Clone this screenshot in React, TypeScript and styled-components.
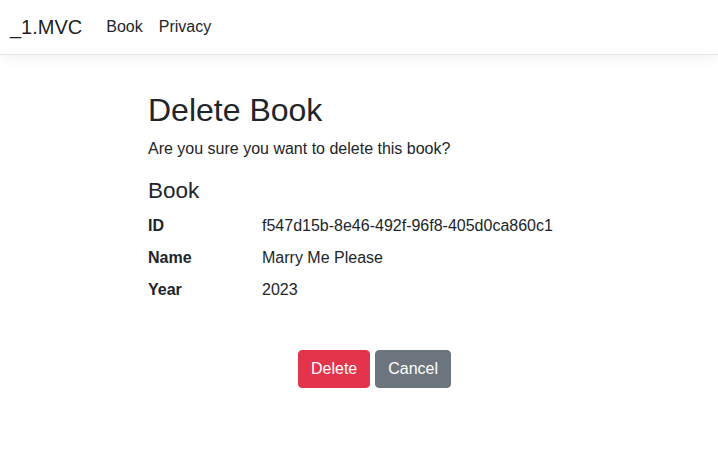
import React from "react";
import styled, { createGlobalStyle } from "styled-components";

const GlobalStyle = createGlobalStyle`
  html, body { margin: 0; padding: 0; background: #fff; }
  body {
    font-family: "Liberation Sans", Arial, sans-serif;
    font-size: 16px;
    line-height: 1.5;
    color: #212529;
  }
  * { box-sizing: border-box; }
`;

const NavBar = styled.header`
  display: flex;
  align-items: center;
  height: 55px;
  padding: 2px 10px 2px;
  border-bottom: 1px solid #e5e5e5;
  box-shadow: 0 4px 12px rgba(0, 0, 0, 0.05);
`;

const Brand = styled.a`
  font-size: 20px;
  line-height: 30px;
  color: rgba(0, 0, 0, 0.9);
  text-decoration: none;
  margin-right: 16px;
`;

const NavLink = styled.a`
  padding: 0 8px;
  font-size: 16px;
  line-height: 24px;
  color: #212529;
  text-decoration: none;
`;

const Main = styled.main`
  padding: 36px 0 0 148px;
  width: 600px;
`;

const Title = styled.h1`
  margin: 0 0 8px;
  font-size: 32px;
  font-weight: 500;
  line-height: 1.2;
`;

const Question = styled.p`
  margin: 0 0 16px;
`;

const SubTitle = styled.h4`
  margin: 15px 0 10px;
  font-size: 22.5px;
  font-weight: 500;
  line-height: 1.2;
`;

const Details = styled.dl`
  display: grid;
  grid-template-columns: 114px 1fr;
  margin: 0 0 40px;
`;

const Term = styled.dt`
  font-weight: 700;
  margin: 0 0 8px;
`;

const Value = styled.dd`
  margin: 0 0 8px;
`;

const Actions = styled.form`
  display: flex;
  justify-content: center;
  gap: 5px;
  padding-left: 1px;
`;

const Button = styled.button<{ $variant: "danger" | "secondary" }>`
  font-family: inherit;
  font-size: 16px;
  line-height: 24px;
  padding: 6px 12px;
  border-radius: 4px;
  border: 1px solid ${(p) => (p.$variant === "danger" ? "#e2344a" : "#6c757d")};
  background: ${(p) => (p.$variant === "danger" ? "#e2344a" : "#6c757d")};
  color: #fff;
  cursor: pointer;
`;

export default function App() {
  return (
    <>
      <GlobalStyle />
      <NavBar>
        <Brand href="#">_1.MVC</Brand>
        <NavLink href="#">Book</NavLink>
        <NavLink href="#">Privacy</NavLink>
      </NavBar>
      <Main>
        <Title>Delete Book</Title>
        <Question>Are you sure you want to delete this book?</Question>
        <SubTitle>Book</SubTitle>
        <Details>
          <Term>ID</Term>
          <Value>f547d15b-8e46-492f-96f8-405d0ca860c1</Value>
          <Term>Name</Term>
          <Value>Marry Me Please</Value>
          <Term>Year</Term>
          <Value>2023</Value>
        </Details>
        <Actions onSubmit={(e) => e.preventDefault()}>
          <Button type="submit" $variant="danger">Delete</Button>
          <Button type="button" $variant="secondary">Cancel</Button>
        </Actions>
      </Main>
    </>
  );
}
